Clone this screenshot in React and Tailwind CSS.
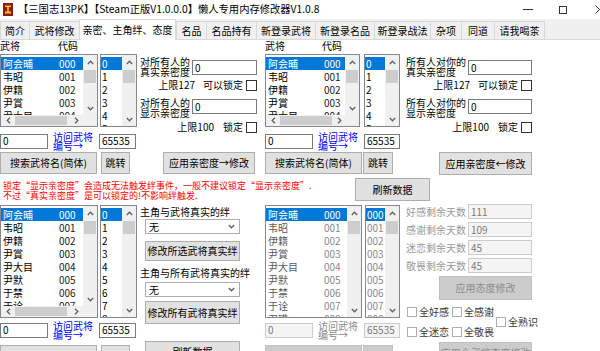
import React from 'react';

const people = [
  ['阿会晡', '000'], ['韦昭', '001'], ['伊籍', '002'], ['尹賞', '003'], ['尹大目', '004'],
  ['尹默', '005'], ['于禁', '006'], ['于诠', '007'], ['卫瓘', '008'],
];

const Chev = ({ dir }) => {
  const d = {
    up: 'M0.8 5L3.5 2.2L6.2 5',
    down: 'M0.8 2L3.5 4.8L6.2 2',
    left: 'M5 0.8L2.2 3.5L5 6.2',
    right: 'M2 0.8L4.8 3.5L2 6.2',
  }[dir];
  return (
    <svg width="7" height="7" viewBox="0 0 7 7">
      <path d={d} fill="none" stroke="#606060" strokeWidth="1.3" />
    </svg>
  );
};

const VScroll = () => (
  <div className="flex w-[14px] shrink-0 flex-col bg-[#f0f0f0]">
    <div className="flex h-[15px] items-center justify-center"><Chev dir="up" /></div>
    <div className="mx-[1px] h-[13px] bg-[#cdcdcd]" />
    <div className="flex-1" />
    <div className="flex h-[14px] items-center justify-center"><Chev dir="down" /></div>
  </div>
);

const HScroll = () => (
  <div className="flex h-[11px] shrink-0">
    <div className="flex flex-1 items-center bg-[#f0f0f0]">
      <div className="flex w-[14px] justify-center"><Chev dir="left" /></div>
      <div className="h-[9px] w-[52px] bg-[#cdcdcd]" />
      <div className="flex-1" />
      <div className="flex w-[14px] justify-center"><Chev dir="right" /></div>
    </div>
    <div className="w-[14px] bg-[#f0f0f0]" />
  </div>
);

function NameList({ size, count, hscroll, disabled }) {
  return (
    <div className={`flex shrink-0 flex-col border border-[#828790] bg-white ${size}`}>
      <div className="flex min-h-0 flex-1">
        <div className="flex-1 overflow-hidden pt-[2px]">
          {people.slice(0, count).map(([n, c], i) => (
            <div
              key={c}
              className={`flex h-[13px] items-center whitespace-nowrap text-[10px] leading-none ${
                i === 0 ? 'bg-[#0078d7] text-white' : disabled ? 'text-[#5a5a5a]' : 'text-black'
              }`}
            >
              <span className="w-[58px] shrink-0 pl-[2px]">{n}</span>
              <span className={i === 0 ? '' : disabled ? 'text-[#8a8a8a]' : 'text-[#222]'}>{c}</span>
            </div>
          ))}
        </div>
        <VScroll />
      </div>
      {hscroll && <HScroll />}
    </div>
  );
}

function NumList({ size, count, pad, disabled }) {
  return (
    <div className={`flex shrink-0 border border-[#828790] bg-white ${size}`}>
      <div className="flex-1 overflow-hidden pt-[2px]">
        {Array.from({ length: count }, (_, i) => (
          <div
            key={i}
            className={`flex h-[13px] items-center pl-[1px] text-[10px] leading-none ${
              i === 0 ? 'bg-[#0078d7] text-white' : disabled ? 'text-[#8a8a8a]' : 'text-black'
            }`}
          >
            {pad ? String(i).padStart(3, '0') : i}
          </div>
        ))}
      </div>
      <VScroll />
    </div>
  );
}

const TextBox = ({ w, value, disabled }) => (
  <div
    className={`flex h-[15px] shrink-0 items-center border pl-[2px] text-[10px] leading-none ${w} ${
      disabled ? 'border-[#cccccc] bg-[#f4f4f4] text-[#7a7a7a]' : 'border-[#7a7a7a] bg-white text-black'
    }`}
  >
    {value}
  </div>
);

const Btn = ({ w, h = 'h-[22px]', children, disabled, className = '' }) => (
  <div
    className={`flex shrink-0 items-center justify-center whitespace-nowrap border text-[10px] leading-none ${w} ${h} ${className} ${
      disabled ? 'border-[#bfbfbf] bg-[#cccccc] text-[#8d8d8d]' : 'border-[#adadad] bg-[#e1e1e1] text-black'
    }`}
  >
    {children}
  </div>
);

const Check = () => <div className="h-[11px] w-[11px] shrink-0 border border-[#333] bg-white" />;

const VisitLabel = ({ disabled }) => (
  <div className={`whitespace-nowrap text-[10px] leading-[9px] ${disabled ? 'text-[#8a8a8a]' : 'text-[#0000ff]'}`}>
    访问武将<br />编号→
  </div>
);

function ListRow({ disabled, rightSide }) {
  return (
    <div className="flex items-center">
      <TextBox w="w-[48px]" value="0" disabled={disabled} />
      <div className="ml-[5px] w-[46px]"><VisitLabel disabled={disabled} /></div>
      <TextBox w={rightSide ? 'w-[36px]' : 'w-[37px]'} value="65535" disabled={disabled} />
    </div>
  );
}

function TopFields({ a, b, labelW, boxW }) {
  return (
    <div className="flex flex-col pt-[17px] text-[10px]">
      <div className="flex items-start">
        <div className={`whitespace-nowrap leading-[10px] ${labelW}`}>{a[0]}<br />{a[1]}</div>
        <div className="ml-auto mt-[3px]"><TextBox w={boxW} value="0" /></div>
      </div>
      <div className="mt-[3px] flex h-[10px] items-center justify-end whitespace-nowrap leading-none">
        <span className="mr-[8px]">上限127</span>
        <span className="mr-[3px]">可以锁定</span>
        <Check />
      </div>
      <div className="mt-[8px] flex items-start">
        <div className={`whitespace-nowrap leading-[10px] ${labelW}`}>{b[0]}<br />{b[1]}</div>
        <div className="ml-auto mt-[1px]"><TextBox w={boxW} value="0" /></div>
      </div>
      <div className="mt-[4px] flex h-[10px] items-center justify-end whitespace-nowrap leading-none">
        <span className="mr-[9px]">上限100</span>
        <span className="mr-[3px]">锁定</span>
        <Check />
      </div>
    </div>
  );
}

const Combo = () => (
  <div className="ml-[5px] flex h-[15px] w-[95px] items-center border border-[#adadad] bg-white pl-[3px] text-[10px] leading-none">
    <span>无</span>
    <span className="ml-auto mr-[4px]"><Chev dir="down" /></span>
  </div>
);

const CheckItem = ({ label }) => (
  <div className="flex h-[11px] items-center whitespace-nowrap text-[10px] leading-none text-[#3a3a3a]">
    <div className="h-[10px] w-[10px] shrink-0 border border-[#adadad] bg-white" />
    <span className="ml-[2px]">{label}</span>
  </div>
);

const tabs = [
  ['简介', 'w-[29px]'], ['武将修改', 'w-[50px]'], ['亲密、主角绊、态度', 'w-[97px]'], ['名品', 'w-[30px]'],
  ['名品持有', 'w-[50px]'], ['新登录武将', 'w-[59px]'], ['新登录名品', 'w-[59px]'], ['新登录战法', 'w-[56px]'],
  ['杂项', 'w-[31px]'], ['同道', 'w-[33px]'], ['请我喝茶', 'w-[51px]'],
];

export default function App() {
  return (
    <div className="h-[351px] w-[600px] overflow-hidden bg-white font-['Noto_Sans_CJK_SC',sans-serif] text-black">
      {/* title bar */}
      <div className="flex h-[19px] items-center bg-white">
        <svg className="ml-[3px] shrink-0" width="10" height="13" viewBox="0 0 10 13">
          <rect width="10" height="13" fill="#8e1b14" />
          <path d="M2 2.5H8V4H5.8V8.5H8V10.5H2V8.5H4.2V4H2Z" fill="#f2c81e" />
        </svg>
        <span className="ml-[5px] whitespace-nowrap text-[10.3px] leading-none">【三国志13PK】【Steam正版V1.0.0.0】懒人专用内存修改器V1.0.8</span>
        <div className="ml-auto flex h-full items-center">
          <div className="flex w-[35px] justify-center">
            <div className="h-px w-[10px] bg-[#333]" />
          </div>
          <div className="flex w-[35px] justify-center">
            <div className="h-[8px] w-[8px] border border-[#333]" />
          </div>
          <div className="w-[20px] overflow-hidden pl-[15px]">
            <svg width="9" height="9" viewBox="0 0 9 9">
              <path d="M0.5 0.5L8.5 8.5M8.5 0.5L0.5 8.5" stroke="#333" strokeWidth="1" />
            </svg>
          </div>
        </div>
      </div>

      {/* tab strip */}
      <div className="flex h-[21px] items-end bg-[#f0f0f0]">
        {tabs.map(([t, w], i) =>
          i === 2 ? (
            <div key={t} className={`flex h-[21px] shrink-0 items-center justify-center whitespace-nowrap border-x border-t border-[#d9d9d9] bg-white text-[10px] leading-none ${w}`}>
              {t}
            </div>
          ) : (
            <div key={t} className={`flex h-[19px] shrink-0 items-center justify-center whitespace-nowrap border-l border-t border-b border-[#d9d9d9] text-[10px] leading-none ${w} ${i === 10 ? 'border-r' : ''}`}>
              {t}
            </div>
          )
        )}
        <div className="h-full flex-1 border-b border-[#d9d9d9]" />
      </div>

      {/* content */}
      <div className="flex flex-col">
        {/* top */}
        <div className="flex h-[110px]">
          <div className="flex w-[138px] shrink-0 flex-col">
            <div className="flex h-[12px] items-center text-[10px] leading-none">
              <span className="w-[58px]">武将</span><span>代码</span>
            </div>
            <div className="mt-[2px] flex gap-[2px]">
              <NameList size="w-[98px] h-[73px]" count={5} hscroll />
              <NumList size="w-[37px] h-[73px]" count={6} />
            </div>
            <div className="mt-[5px]"><ListRow /></div>
          </div>
          <div className="ml-[2px] w-[117px] shrink-0">
            <TopFields a={['对所有人的', '真实亲密度']} b={['对所有人的', '显示亲密度']} labelW="w-[52px]" boxW="w-[65px]" />
          </div>
          <div className="ml-[8px] flex w-[135px] shrink-0 flex-col">
            <div className="flex h-[12px] items-center text-[10px] leading-none">
              <span className="w-[57px]">武将</span><span>代码</span>
            </div>
            <div className="mt-[2px] flex gap-[4px]">
              <NameList size="w-[95px] h-[73px]" count={5} hscroll />
              <NumList size="w-[36px] h-[73px]" count={6} />
            </div>
            <div className="mt-[5px]"><ListRow rightSide /></div>
          </div>
          <div className="ml-[6px] w-[126px] shrink-0">
            <TopFields a={['所有人对你的', '真实亲密度']} b={['所有人对你的', '显示亲密度']} labelW="w-[60px]" boxW="w-[64px]" />
          </div>
        </div>

        {/* button row */}
        <div className="mt-[2px] flex items-start">
          <Btn w="w-[97px]">搜索武将名(简体)</Btn>
          <Btn w="w-[29px]" className="ml-[4px]">跳转</Btn>
          <Btn w="w-[92px]" className="ml-[33px]">应用亲密度→修改</Btn>
          <Btn w="w-[97px]" className="ml-[10px]">搜索武将名(简体)</Btn>
          <Btn w="w-[30px]" className="ml-[1px]">跳转</Btn>
          <Btn w="w-[93px]" h="h-[23px]" className="ml-[46px]">应用亲密度←修改</Btn>
        </div>

        {/* warning + refresh */}
        <div className="mt-[3px] flex h-[23px]">
          <div className="w-[355px] shrink-0 whitespace-nowrap pl-[3px] pt-[3px] text-[9px] leading-[9.5px] text-[#ff0000]">
            锁定“显示亲密度”会造成无法触发绊事件，一般不建议锁定“显示亲密度”.<br />
            不过“真实亲密度”是可以锁定的!不影响绊触发.
          </div>
          <Btn w="w-[75px]" h="h-[23px]">刷新数据</Btn>
        </div>

        {/* lower */}
        <div className="mt-[3px] flex">
          <div className="flex w-[138px] shrink-0 flex-col pt-[1px]">
            <div className="flex gap-[2px]">
              <NameList size="w-[98px] h-[113px]" count={8} hscroll />
              <NumList size="w-[37px] h-[113px]" count={9} />
            </div>
            <div className="mt-[3px]"><ListRow /></div>
            <div className="mt-[6px] flex">
              <Btn w="w-[97px]">搜索武将名(简体)</Btn>
              <Btn w="w-[29px]" className="ml-[4px]">跳转</Btn>
            </div>
          </div>

          <div className="ml-[2px] flex w-[105px] shrink-0 flex-col whitespace-nowrap text-[10px]">
            <div className="mt-[2px] h-[12px] leading-[12px]">主角与武将真实的绊</div>
            <div className="mt-[1px]"><Combo /></div>
            <Btn w="w-[95px]" h="h-[20px]" className="ml-[5px] mt-[7px]">修改所选武将真实绊</Btn>
            <div className="mt-[6px] h-[12px] leading-[12px]">主角与所有武将真实的绊</div>
            <div className="mt-[3px]"><Combo /></div>
            <Btn w="w-[95px]" h="h-[23px]" className="ml-[5px] mt-[4px]">修改所有武将真实绊</Btn>
            <Btn w="w-[95px]" className="ml-[5px] mt-[17px]">刷新数据</Btn>
          </div>

          <div className="ml-[20px] flex w-[135px] shrink-0 flex-col pt-[1px]">
            <div className="flex gap-[3px]">
              <NameList size="w-[97px] h-[113px]" count={9} disabled />
              <NumList size="w-[35px] h-[113px]" count={9} pad disabled />
            </div>
            <div className="mt-[3px]"><ListRow disabled rightSide /></div>
            <div className="mt-[6px] flex">
              <Btn w="w-[97px]" disabled>搜索武将名(简体)</Btn>
              <Btn w="w-[30px]" className="ml-[1px]" disabled>跳转</Btn>
            </div>
          </div>

          <div className="ml-[6px] flex w-[130px] shrink-0 flex-col">
            <div className="flex w-[126px] flex-col gap-[3px]">
              {[['好感剩余天数', '111'], ['感谢剩余天数', '109'], ['迷恋剩余天数', '45'], ['敬畏剩余天数', '45']].map(([l, v]) => (
                <div key={l} className="flex h-[15px] items-center">
                  <span className="whitespace-nowrap text-[10px] leading-none text-[#9a9a9a]">{l}</span>
                  <div className="ml-auto"><TextBox w="w-[64px]" value={v} disabled /></div>
                </div>
              ))}
            </div>
            <Btn w="w-[93px]" h="h-[24px]" className="ml-[33px] mt-[3px]" disabled>应用态度修改</Btn>
            <div className="ml-[1px] mt-[6px] flex h-[31px] items-center">
              <div className="flex w-[45px] shrink-0 flex-col gap-[9px]">
                <CheckItem label="全好感" />
                <CheckItem label="全迷恋" />
              </div>
              <div className="flex w-[44px] shrink-0 flex-col gap-[9px]">
                <CheckItem label="全感谢" />
                <CheckItem label="全敬畏" />
              </div>
              <CheckItem label="全熟识" />
            </div>
            <Btn w="w-[93px]" className="ml-[33px] mt-[5px]" disabled>应用全武将态度修改</Btn>
          </div>
        </div>
      </div>
    </div>
  );
}
